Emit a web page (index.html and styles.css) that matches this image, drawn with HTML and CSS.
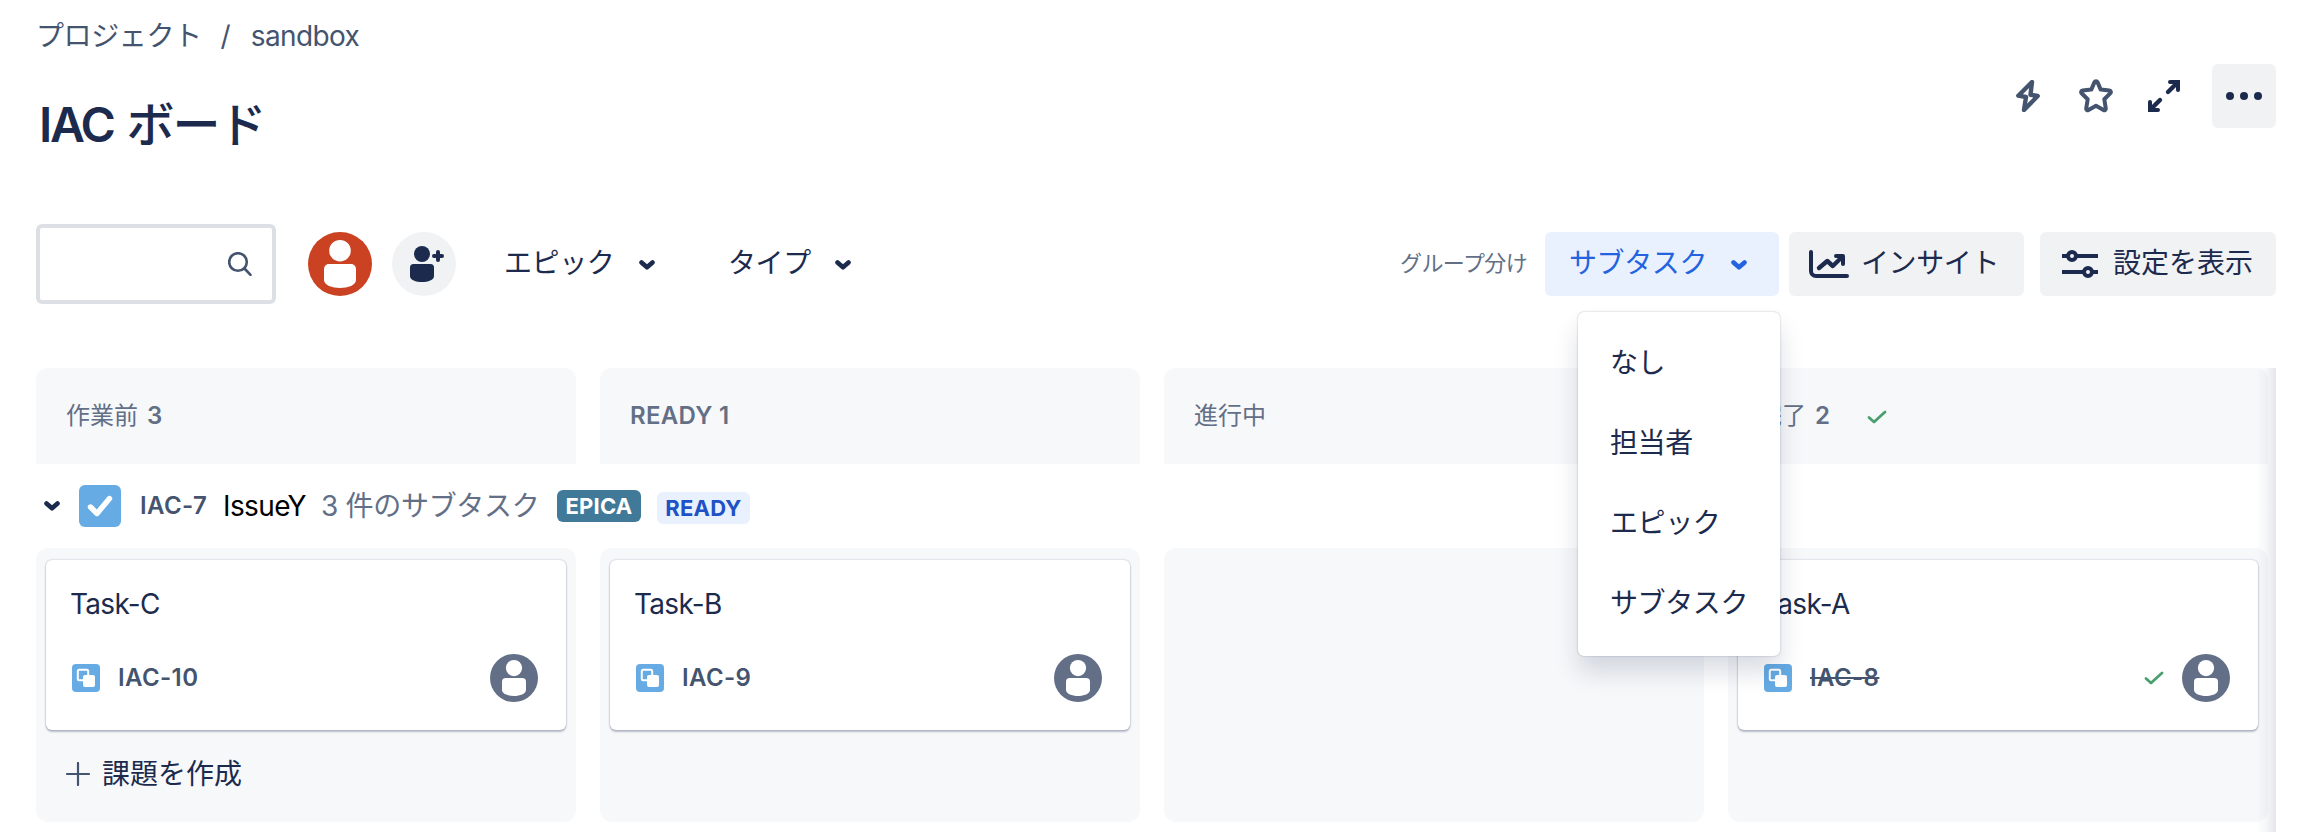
FILE: index.html
```html
<!DOCTYPE html>
<html lang="ja">
<head>
<meta charset="utf-8">
<title>IAC ボード</title>
<link rel="stylesheet" href="styles.css">
</head>
<body>
<svg class="defs" width="0" height="0">
  <symbol id="chevron" viewBox="0 0 16 10"><path d="M2.500 2.500 8 7.300l5.500-4.800" fill="none" stroke="currentColor" stroke-width="4.600" stroke-linecap="round" stroke-linejoin="round"/></symbol>
  <symbol id="person" viewBox="0 0 64 64"><circle cx="32" cy="32" r="32" fill="currentColor"/><circle cx="32" cy="18.700" r="10.800" fill="#fff"/><path d="M16 37a5 5 0 0 1 5-5h22a5 5 0 0 1 5 5v11c0 5-8 8-16 8s-16-3-16-8z" fill="#fff"/></symbol>
  <symbol id="subtask" viewBox="0 0 28 28"><rect width="28" height="28" rx="4" fill="#66abe4"/><rect x="5.800" y="5.800" width="10.400" height="10.400" rx="1.500" fill="none" stroke="#fff" stroke-width="2"/><rect x="11" y="11" width="12" height="12" rx="2" fill="#fff"/></symbol>
  <symbol id="tick" viewBox="0 0 20 14"><path d="M2 7.500 7 12 18 2" fill="none" stroke="#4a9f6e" stroke-width="2.800" stroke-linecap="round" stroke-linejoin="round"/></symbol>
</svg>

<nav class="breadcrumb"><span class="kana">プロジェクト</span><span class="slash">/</span><span class="crumb">sandbox</span></nav>

<header class="head">
  <h1 class="title"><span class="title-key">IAC</span><span class="title-ja">ボード</span></h1>
  <div class="actions">
    <svg class="bolt" viewBox="0 0 24 32"><path d="M16 2 2.300 15.700l7.700 1.300L8 30 21.700 16l-7.200-1.200z" fill="none" stroke="currentColor" stroke-width="4.400" stroke-linejoin="round"/></svg>
    <svg class="star" viewBox="0 0 36 36"><path d="M18 3.200c.8 0 1.300.5 1.600 1.200l3.100 7.200 8.700.9c1.500.2 2 1.700 1 2.700l-6.100 6 1.500 9.300c.2 1.500-1.100 2.200-2.300 1.500L18 27.800 10.500 32c-1.200.7-2.500 0-2.300-1.500l1.500-9.300-6.100-6c-1-1-.5-2.500 1-2.700l8.700-.9 3.100-7.200c.3-.7.800-1.200 1.600-1.200z" fill="none" stroke="currentColor" stroke-width="4" stroke-linejoin="round"/></svg>
    <svg class="expand" viewBox="0 0 32 32"><path d="M20 12 28 4M12 20 4 28" stroke="currentColor" stroke-width="4.400" stroke-linecap="round"/><path d="M22 2h8v8M2 22v8h8" fill="none" stroke="currentColor" stroke-width="4" stroke-linecap="round"/><path d="M24 0h8v8zM0 24v8h8z" fill="currentColor"/></svg>
    <button class="more"><svg viewBox="0 0 36 8"><circle cx="4" cy="4" r="4"/><circle cx="18" cy="4" r="4"/><circle cx="32" cy="4" r="4"/></svg></button>
  </div>
</header>

<div class="toolbar">
  <div class="search"><svg viewBox="0 0 24 24"><circle cx="10" cy="10" r="8.800" fill="none" stroke="currentColor" stroke-width="2.600"/><path d="M16.500 16.500 22.500 22.800" stroke="currentColor" stroke-width="2.600" stroke-linecap="round"/></svg></div>
  <svg class="avatar-lg"><use href="#person"/></svg>
  <div class="add-person"><svg viewBox="0 0 34 36"><circle cx="12" cy="8" r="8"/><path d="M0 21.500a3.500 3.500 0 0 1 3.500-3.500h17a3.500 3.500 0 0 1 3.500 3.500V30c0 4-6 6-12 6s-12-2-12-6z"/><path d="M28 6v8M24 10h8" fill="none" stroke="currentColor" stroke-width="4" stroke-linecap="round"/></svg></div>
  <div class="filter filter-epic"><span class="kana">エピック</span><svg class="chev"><use href="#chevron"/></svg></div>
  <div class="filter filter-type"><span class="kana">タイプ</span><svg class="chev"><use href="#chevron"/></svg></div>
  <div class="group">
    <span class="group-label">グループ分け</span>
    <button class="btn btn-on"><span class="kana">サブタスク</span><svg class="chev"><use href="#chevron"/></svg></button>
    <div class="menu">
      <div class="menu-item">なし</div>
      <div class="menu-item">担当者</div>
      <div class="menu-item">エピック</div>
      <div class="menu-item">サブタスク</div>
    </div>
  </div>
  <button class="btn btn-insight"><svg class="chart" viewBox="0 0 40 28"><path d="M2 2v19a5 5 0 0 0 5 5h31" fill="none" stroke="currentColor" stroke-width="4" stroke-linecap="round"/><path d="M10 18 18.300 11l5.500 5L32 8" fill="none" stroke="currentColor" stroke-width="4.400" stroke-linecap="round" stroke-linejoin="round"/><path d="M27 6h7v8" fill="none" stroke="currentColor" stroke-width="4" stroke-linecap="round" stroke-linejoin="round"/></svg><span class="kana">インサイト</span></button>
  <button class="btn btn-settings"><svg class="sliders" viewBox="0 0 36 28"><path d="M0 6h36M0 22h36" stroke="currentColor" stroke-width="4"/><circle cx="10" cy="6" r="4" fill="#f1f2f4" stroke="currentColor" stroke-width="4"/><circle cx="26" cy="22" r="4" fill="#f1f2f4" stroke="currentColor" stroke-width="4"/></svg><span class="kanji">設定を表示</span></button>
</div>

<main class="board">
  <div class="row">
    <div class="col-head">作業前 <b>3</b></div>
    <div class="col-head"><b class="ready">READY 1</b></div>
    <div class="col-head">進行中</div>
    <div class="col-head">完了 <b>2</b><svg class="tick head-tick"><use href="#tick"/></svg></div>
  </div>
  <div class="lane">
    <svg class="chev"><use href="#chevron"/></svg>
    <svg class="task" viewBox="0 0 42 42"><rect width="42" height="42" rx="6" fill="#66abe4"/><path d="M11.500 22 18 28.500 30.500 13.500" fill="none" stroke="#fff" stroke-width="5.400" stroke-linecap="round" stroke-linejoin="round"/></svg>
    <span class="key">IAC-7</span>
    <span class="summary">IssueY</span>
    <span class="count">3 件のサブタスク</span>
    <span class="tag tag-epic">EPICA</span>
    <span class="tag tag-ready">READY</span>
  </div>
  <div class="row">
    <section class="cell">
      <article class="card"><div class="card-title">Task-C</div><div class="card-foot"><svg class="sub"><use href="#subtask"/></svg><span class="key">IAC-10</span><svg class="avatar"><use href="#person"/></svg></div></article>
      <div class="create"><svg viewBox="0 0 24 24"><path d="M12 1v22M1 12h22" stroke="currentColor" stroke-width="2.200" stroke-linecap="round"/></svg>課題を作成</div>
    </section>
    <section class="cell">
      <article class="card"><div class="card-title">Task-B</div><div class="card-foot"><svg class="sub"><use href="#subtask"/></svg><span class="key">IAC-9</span><svg class="avatar"><use href="#person"/></svg></div></article>
    </section>
    <section class="cell"></section>
    <section class="cell">
      <article class="card"><div class="card-title">Task-A</div><div class="card-foot"><svg class="sub"><use href="#subtask"/></svg><span class="key done">IAC-8</span><svg class="tick card-tick"><use href="#tick"/></svg><svg class="avatar"><use href="#person"/></svg></div></article>
    </section>
  </div>
  <div class="edge"></div>
</main>
</body>
</html>
```
FILE: styles.css
```css
* { box-sizing: border-box; }
body {
  margin: 0;
  padding: 0 24px 0 36px;
  height: 832px;
  overflow: hidden;
  background: #fff;
  color: #1c2b4d;
  font-family: Inter, "Noto Sans CJK JP", sans-serif;
  font-size: 28px;
  line-height: 40px;
}
svg { display: block; flex: none; }
.defs { position: absolute; }
button { border: 0; margin: 0; font: inherit; color: inherit; }
.kana { letter-spacing: -0.4px; }
.btn .kana, .btn .kanji, .filter .kana { padding-bottom: 2px; }

.breadcrumb { display: flex; height: 64px; padding-top: 16px; color: #44546f; }
.slash { margin: 0 20px 0 19px; }
.crumb { letter-spacing: -0.6px; }

.head { display: flex; justify-content: space-between; height: 160px; }
.title { display: flex; gap: 13px; margin: 0; padding: 29px 0 0 3px; font-size: 48px; line-height: 64px; font-weight: 500; letter-spacing: -2px; }
.title-key { font-weight: 600; letter-spacing: -2.4px; }
.actions { display: flex; align-items: center; height: 64px; color: #44546f; }
.bolt { width: 24px; height: 32px; margin-right: 38px; }
.star { width: 36px; height: 36px; margin-right: 34px; }
.expand { width: 32px; height: 32px; margin-right: 32px; color: #1c2b4d; }
.more { display: flex; align-items: center; justify-content: center; width: 64px; height: 64px; padding: 0; border-radius: 6px; background: #f1f2f4; color: #1c2b4d; }
.more svg { width: 36px; height: 8px; fill: currentColor; }

.toolbar { display: flex; align-items: center; height: 80px; }
.search { display: flex; align-items: center; justify-content: flex-end; width: 240px; height: 80px; padding-right: 20px; margin-right: 32px; border: 4px solid #dcdfe4; border-radius: 6px; color: #44546f; }
.search svg { width: 24px; height: 24px; }
.avatar-lg { width: 64px; height: 64px; margin-right: 20px; color: #cb4223; }
.add-person { width: 64px; height: 64px; padding: 14px 0 0 18px; border-radius: 50%; background: #f1f2f4; }
.add-person svg { width: 34px; height: 36px; fill: currentColor; }
.chev { width: 16px; height: 10px; }
.filter { display: flex; align-items: center; justify-content: space-between; margin-left: 48px; }
.filter .chev { margin-top: 2px; }
.filter-epic { width: 151px; }
.filter-type { width: 123px; margin-left: 73px; }
.group { position: relative; display: flex; align-items: center; margin: 0 10px 0 auto; }
.group-label { width: 145px; padding-bottom: 3px; font-size: 22px; letter-spacing: -0.6px; color: #626f86; white-space: nowrap; }
.btn { display: flex; align-items: center; height: 64px; padding: 0; border-radius: 6px; background: #f1f2f4; white-space: nowrap; }
.btn-on { justify-content: space-between; width: 234px; padding: 0 32px 0 24px; background: #e9f1fe; color: #2463e0; }
.btn-on .chev { margin-top: 2px; }
.btn-insight { width: 235px; margin-right: 16px; padding-left: 20px; gap: 12px; }
.chart { width: 40px; height: 28px; }
.btn-settings { width: 236px; padding-left: 22px; gap: 15px; }
.sliders { width: 36px; height: 28px; }

.menu {
  position: absolute;
  top: 80px;
  left: 178px;
  z-index: 2;
  width: 202px;
  height: 344px;
  padding: 11px 0;
  border-radius: 6px;
  background: #fff;
  box-shadow: 0 16px 24px rgba(9, 30, 66, .15), 0 0 2px rgba(9, 30, 66, .31);
}
.menu-item { height: 80px; padding-left: 32px; line-height: 80px; letter-spacing: -0.4px; white-space: nowrap; }

.board { position: relative; height: 464px; margin-top: 64px; }
.row { display: grid; grid-template-columns: repeat(4, 540px); column-gap: 24px; }
.col-head { display: flex; align-items: center; height: 96px; padding-left: 30px; gap: 9px; border-radius: 12px 12px 0 0; background: #f7f8fa; color: #626f86; font-size: 24px; }
.col-head b { font-weight: 600; }
.ready { letter-spacing: 0.3px; }
.tick { width: 20px; height: 14px; }
.head-tick { margin: 2px 0 0 28px; }

.lane { display: flex; align-items: center; height: 84px; padding: 0 0 0 8px; white-space: nowrap; }
.task { width: 42px; height: 42px; margin: 0 19px; }
.key { font-size: 24px; font-weight: 600; letter-spacing: 0.4px; color: #44546f; }
.lane .key { width: 83px; }
.summary { width: 98px; color: #000; letter-spacing: -0.6px; }
.count { width: 236px; color: #626f86; letter-spacing: -0.3px; }
.tag { height: 32px; border-radius: 6px; font-size: 22px; line-height: 32px; font-weight: 700; text-align: center; letter-spacing: 0.2px; }
.tag-epic { width: 84px; margin-right: 16px; background: #417a99; color: #fff; }
.tag-ready { width: 93px; margin-top: 4px; background: #e9f1fe; color: #2052c6; }

.cell { height: 274px; padding: 12px 10px; border-radius: 12px; background: #f7f8fa; }
.card { height: 170px; padding: 24px 28px 0 26px; border-radius: 6px; background: #fff; box-shadow: 0 2px 2px rgba(9, 30, 66, .25), 0 0 2px rgba(9, 30, 66, .31); }
.card-title { margin-left: -2px; letter-spacing: -0.7px; }
.card-foot { display: flex; align-items: center; height: 48px; margin-top: 30px; }
.sub { width: 28px; height: 28px; margin-right: 18px; }
.done { text-decoration: line-through; }
.avatar { width: 48px; height: 48px; margin-left: auto; color: #626f86; }
.card-tick { margin-left: auto; }
.card-tick + .avatar { margin-left: 18px; }
.create { display: flex; align-items: center; gap: 12px; height: 88px; padding-left: 20px; }
.create svg { width: 24px; height: 24px; color: #44546f; }
.edge { position: absolute; top: 0; right: 0; width: 20px; height: 464px; background: linear-gradient(to right, rgba(9, 30, 66, 0), rgba(9, 30, 66, .03) 45%, rgba(9, 30, 66, .11)); }
```
